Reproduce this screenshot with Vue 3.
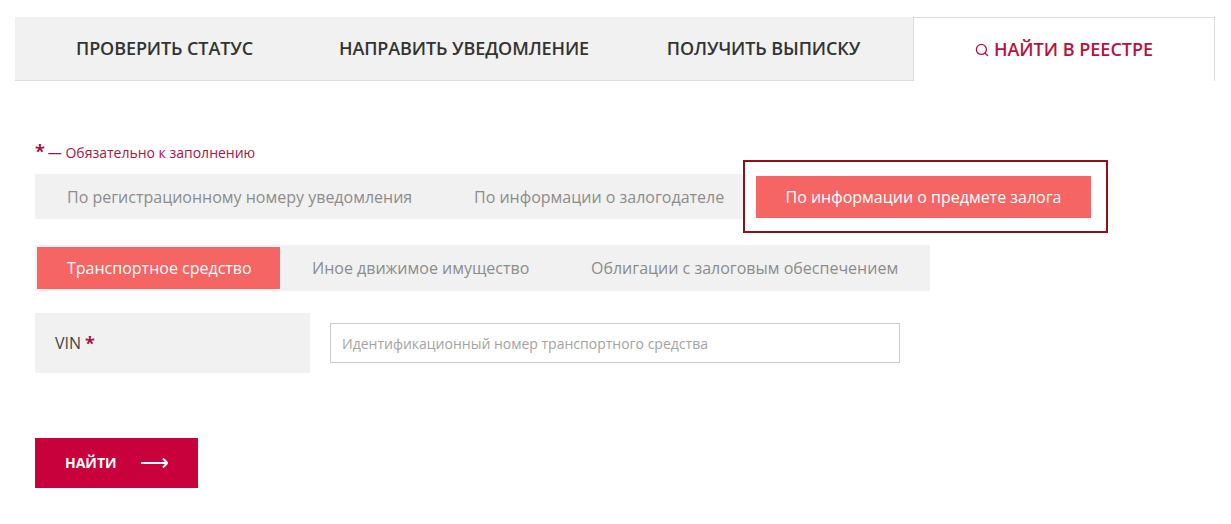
<script setup>
const topTabs = ['ПРОВЕРИТЬ СТАТУС', 'НАПРАВИТЬ УВЕДОМЛЕНИЕ', 'ПОЛУЧИТЬ ВЫПИСКУ']
const subTabs = ['Транспортное средство', 'Иное движимое имущество', 'Облигации с залоговым обеспечением']
</script>

<template>
  <div class="page">
    <nav class="tabs">
      <div v-for="t in topTabs" :key="t" class="tab">{{ t }}</div>
      <div class="tab tab-active">
        <svg class="search" width="14" height="14" viewBox="0 0 14 14" fill="none" stroke="currentColor" stroke-width="1.3">
          <circle cx="6.4" cy="6.4" r="5" />
          <path d="M10 10 13 13" />
        </svg>
        <span>НАЙТИ В РЕЕСТРЕ</span>
      </div>
    </nav>

    <main class="content">
      <p class="note"><span class="star">*</span><span class="note-text">— Обязательно к заполнению</span></p>

      <div class="kinds">
        <div class="pill kind-a">По регистрационному номеру уведомления</div>
        <div class="pill kind-b">По информации о залогодателе</div>
        <div class="kind-active">По информации о предмете залога</div>
      </div>

      <div class="subs">
        <div class="pill sub sub-active">{{ subTabs[0] }}</div>
        <div class="pill sub sub-b">{{ subTabs[1] }}</div>
        <div class="pill sub sub-c">{{ subTabs[2] }}</div>
      </div>

      <div class="field">
        <label class="field-label">VIN <span class="req">*</span></label>
        <input class="field-input" type="text" placeholder="Идентификационный номер транспортного средства" />
      </div>

      <button class="submit" type="button">
        <span>НАЙТИ</span>
        <svg class="arrow" width="27" height="12" viewBox="0 0 27 12" fill="none" stroke="currentColor" stroke-width="2">
          <path d="M0 6H26M22 1.5 26.4 6 22 10.5" />
        </svg>
      </button>
    </main>
  </div>
</template>

<style scoped>
.page {
  width: 1231px;
  height: 524px;
  overflow: hidden;
  background: #fff;
  font-family: "Open Sans", "Noto Sans", sans-serif;
  padding-top: 17px;
  box-sizing: border-box;
}
.tabs {
  margin-left: 15px;
  width: 1200px;
  height: 64px;
  display: grid;
  grid-template-columns: 299px 300px 299px 302px;
}
.tab {
  display: flex;
  align-items: center;
  justify-content: center;
  gap: 5px;
  background: #f1f1f1;
  border-bottom: 1px solid #dedede;
  color: #333;
  font-size: 18px;
  font-weight: 600;
  letter-spacing: -0.1px;
  padding-bottom: 2px;
  box-sizing: border-box;
}
.tab-active {
  background: #fff;
  color: #b5123f;
  border: 1px solid #dedede;
  border-bottom: 0;
  padding-bottom: 1px;
  letter-spacing: 0;
}
.search { margin-top: 2px; }
.content {
  padding: 60px 0 0 35px;
}
.note {
  margin: 0;
  height: 21px;
  display: flex;
  align-items: center;
  gap: 3px;
  font-size: 14px;
  color: #a2164a;
}
.star {
  font-size: 18px;
  line-height: 21px;
  font-weight: 700;
}
.note-text {
  margin-top: 2px;
}
.kinds {
  margin-top: 12px;
  display: flex;
  align-items: flex-start;
  width: 708px;
  height: 45px;
  background: #f1f1f1;
  font-size: 16px;
  color: #8c8c8c;
  white-space: nowrap;
}
.pill {
  box-sizing: border-box;
  display: flex;
  align-items: center;
  flex: none;
}
.kind-a { padding-left: 32px; width: 439px; height: 45px; }
.kind-b { width: 282px; height: 45px; }
.kind-active {
  position: relative;
  flex: none;
  margin-top: 2px;
  width: 335px;
  height: 42px;
  padding-bottom: 1px;
  box-sizing: border-box;
  background: #f46563;
  color: #fff;
  display: flex;
  align-items: center;
  justify-content: center;
}
.kind-active::after {
  content: "";
  position: absolute;
  inset: -16px -17px -15px -13px;
  border: 2px solid #8f1016;
}
.subs {
  margin-top: 26px;
  display: flex;
  align-items: center;
  width: 895px;
  height: 46px;
  padding-left: 2px;
  box-sizing: border-box;
  background: #f1f1f1;
  font-size: 16px;
  color: #8c8c8c;
  white-space: nowrap;
}
.sub { height: 42px; }
.sub-active {
  width: 243px;
  padding-left: 30px;
  background: #f46563;
  color: #fff;
}
.sub-b { width: 279px; padding-left: 32px; }
.sub-c { padding-left: 32px; }
.field {
  margin-top: 22px;
  display: flex;
  align-items: center;
  gap: 20px;
}
.field-label {
  width: 275px;
  height: 60px;
  box-sizing: border-box;
  padding-left: 20px;
  background: #f1f1f1;
  color: #444;
  font-size: 16px;
  display: flex;
  align-items: center;
  gap: 4px;
}
.req { color: #a2164a; font-weight: 700; font-size: 18px; }
.field-input {
  width: 570px;
  height: 40px;
  box-sizing: border-box;
  border: 1px solid #ccc;
  background: #fff;
  padding: 0 11px;
  font-family: inherit;
  font-size: 14px;
  outline: none;
}
.field-input::placeholder { color: #a3a3a3; opacity: 1; }
.submit {
  margin-top: 65px;
  width: 163px;
  height: 50px;
  border: 0;
  background: #c8003c;
  color: #fff;
  font-family: inherit;
  font-size: 14px;
  font-weight: 700;
  display: flex;
  align-items: center;
  gap: 24px;
  padding: 0 0 2px 30px;
}
.arrow { margin-top: 2px; }
</style>

<style>
html, body { margin: 0; background: #fff; }
</style>
